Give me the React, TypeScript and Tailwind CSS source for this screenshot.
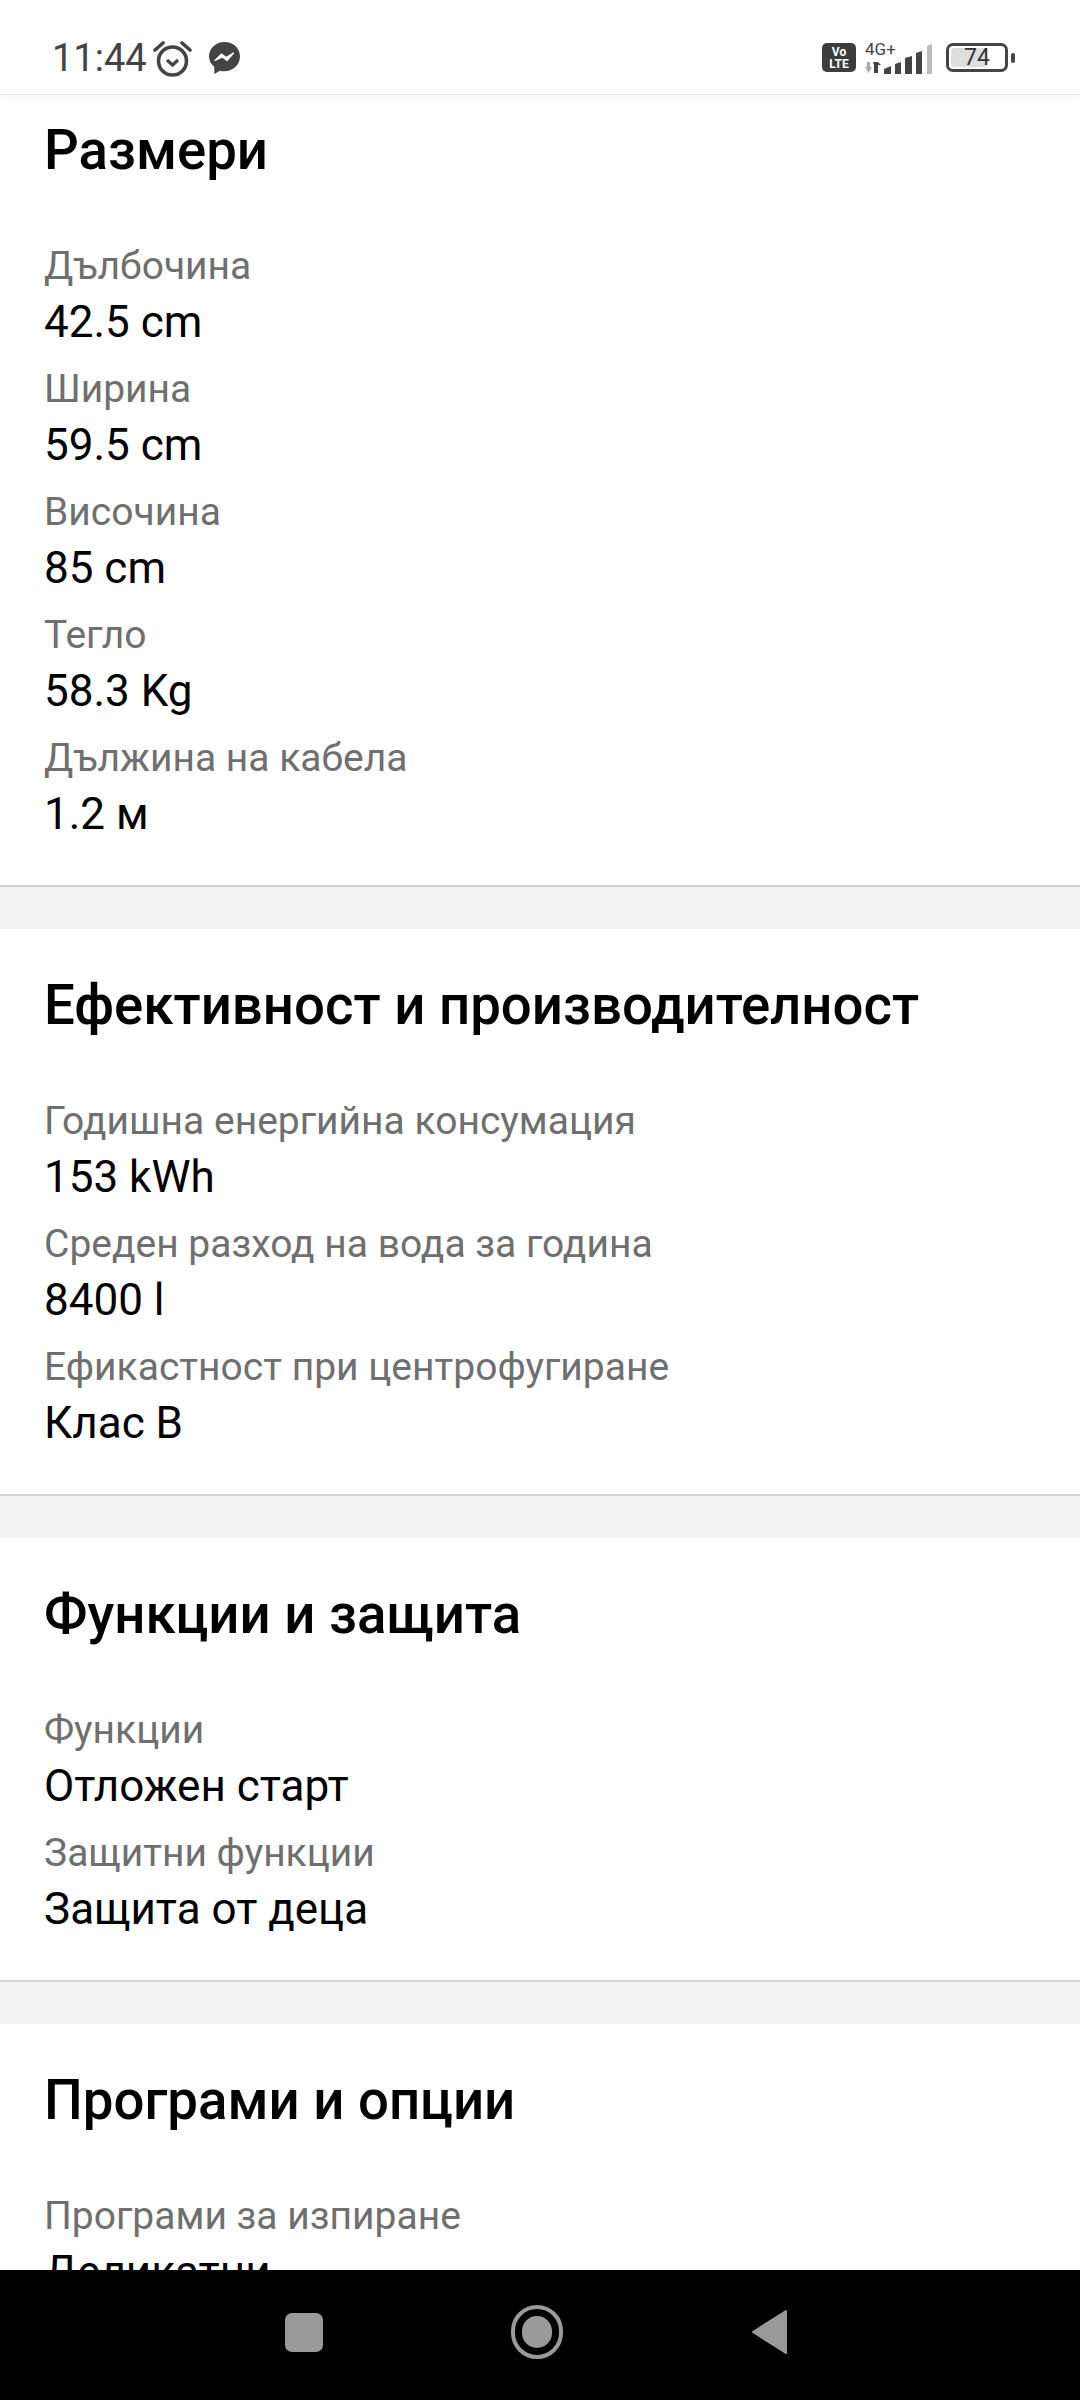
import React from 'react';

type Spec = { label: string; value: string };
type Group = { title: string; specs: Spec[] };

const groups: Group[] = [
  {
    title: 'Размери',
    specs: [
      { label: 'Дълбочина', value: '42.5 cm' },
      { label: 'Ширина', value: '59.5 cm' },
      { label: 'Височина', value: '85 cm' },
      { label: 'Тегло', value: '58.3 Kg' },
      { label: 'Дължина на кабела', value: '1.2 м' },
    ],
  },
  {
    title: 'Ефективност и производителност',
    specs: [
      { label: 'Годишна енергийна консумация', value: '153 kWh' },
      { label: 'Среден разход на вода за година', value: '8400 l' },
      { label: 'Ефикастност при центрофугиране', value: 'Клас B' },
    ],
  },
  {
    title: 'Функции и защита',
    specs: [
      { label: 'Функции', value: 'Отложен старт' },
      { label: 'Защитни функции', value: 'Защита от деца' },
    ],
  },
  {
    title: 'Програми и опции',
    specs: [{ label: 'Програми за изпиране', value: 'Деликатни' }],
  },
];

function AlarmIcon() {
  return (
    <svg width="39" height="37" viewBox="0 0 39 37" fill="none" stroke="#444" strokeWidth="3.6">
      <circle cx="19.500" cy="21" r="14" />
      <path d="M14 20l5.500 5 5.500-5" strokeWidth="3.200" />
      <path d="M2 10l8-7M37 10l-8-7" strokeLinecap="round" />
    </svg>
  );
}

function MessengerIcon() {
  return (
    <svg width="31" height="32" viewBox="0 0 31 32">
      <path d="M15.500 0C7 0 0 6.300 0 14.200c0 4.300 2 8 5.300 10.600V32l5.800-3.300c1.400.4 2.900.6 4.400.6 8.500 0 15.500-6.500 15.500-15S24 0 15.500 0z" fill="#444" />
      <path d="M6 18.500l6.500-6.500 4.500 3.500 7.500-4.500-6.500 7.500-4.500-3.500z" fill="#fff" stroke="#fff" strokeWidth="1.200" strokeLinejoin="round" />
    </svg>
  );
}

function VolteIcon() {
  return (
    <div className="flex h-[29px] w-[34px] flex-col items-center justify-center rounded-[5px] bg-[#3c3c3c] text-[12px] leading-[12px] font-bold text-white">
      <span>Vo</span>
      <span>LTE</span>
    </div>
  );
}

function SignalIcon() {
  return (
    <svg width="68" height="30" viewBox="0 0 68 30">
      {/* data arrows */}
      <path d="M0 23h2v-5h3v5h2l-3.500 6z" fill="#aaa" />
      <path d="M8 18h5l3 3h-3v8H9v-8z" fill="#444" />
      {/* signal bars */}
      <path d="M19 25l7-3v8h-7zM30 20l6-2v12h-6zM40 14l7-2v18h-7zM51 9l6-2v23h-6z" fill="#444" />
      <path d="M62 2l5-2v30h-5z" fill="#bbb" />
    </svg>
  );
}

function BatteryIcon() {
  return (
    <div className="flex items-center gap-[3px]">
      <div className="relative flex h-[29px] w-[62px] items-center justify-center overflow-hidden rounded-[7px] border-[3px] border-[#444]">
        <div className="absolute inset-y-[2px] left-[2px] w-[36px] rounded-[3px] bg-[#dedede]" />
        <span className="relative text-[23px] leading-none text-[#333]">74</span>
      </div>
      <div className="h-[10px] w-[4px] rounded-[2px] bg-[#444]" />
    </div>
  );
}

function StatusBar() {
  return (
    <header className="relative z-10 flex h-[94px] shrink-0 items-start justify-between bg-white pt-[38px] pr-[65px] pl-[52px] shadow-[0_1px_0_#e8e8e8,0_3px_10px_rgba(0,0,0,0.05)]">
      <div className="flex items-center">
        <span className="text-[38px] leading-[40px] text-[#444]">11:44</span>
        <span className="ml-[6px] flex"><AlarmIcon /></span>
        <span className="ml-[17px] flex"><MessengerIcon /></span>
      </div>
      <div className="flex items-start pt-[5px]">
        <VolteIcon />
        <div className="relative ml-[9px] h-[30px] w-[68px]">
          <span className="absolute -top-[3px] left-0 text-[17px] leading-[18px] text-[#444]">4G+</span>
          <div className="absolute -bottom-[1px] left-0 flex"><SignalIcon /></div>
        </div>
        <div className="ml-[13px]"><BatteryIcon /></div>
      </div>
    </header>
  );
}

function SpecRow({ spec }: { spec: Spec }) {
  return (
    <div className="h-[123px]">
      <div className="text-[39px] leading-[56px] text-[#6f6f6f]">{spec.label}</div>
      <div className="text-[44px] leading-[56px] text-black">{spec.value}</div>
    </div>
  );
}

function SpecGroup({ group, first }: { group: Group; first: boolean }) {
  return (
    <section className="border-b-2 border-[#d6d6d6] bg-white px-[44px]">
      <h2 className={`text-[54.600px] leading-[64px] font-medium text-black ${first ? 'pt-[24px]' : 'pt-[44px]'}`}>
        {group.title}
      </h2>
      <div className="pt-[56px] pb-[32px]">
        {group.specs.map((spec) => (
          <SpecRow key={spec.label} spec={spec} />
        ))}
      </div>
    </section>
  );
}

function NavBar() {
  return (
    <nav className="flex h-[130px] shrink-0 items-center justify-center bg-black pr-[9px] pb-[6px]">
      <div className="flex items-center gap-[188px]">
        <div className="h-[39px] w-[38px] rounded-[7px] bg-[#9a9a9a]" />
        <div className="flex h-[54px] w-[52px] items-center justify-center rounded-full border-[4px] border-[#9a9a9a]">
          <div className="h-[32px] w-[30px] rounded-full bg-[#9a9a9a]" />
        </div>
        <svg width="36" height="46" viewBox="0 0 36 46">
          <path d="M35 2v42L2 23z" fill="#9a9a9a" stroke="#9a9a9a" strokeWidth="2" strokeLinejoin="round" />
        </svg>
      </div>
    </nav>
  );
}

export default function App() {
  return (
    <div className="flex h-[2400px] w-[1080px] flex-col overflow-hidden bg-white font-['Roboto',sans-serif]">
      <StatusBar />
      <main className="min-h-0 flex-1 overflow-hidden bg-[#f2f2f2]">
        <div className="flex flex-col gap-[42px]">
          {groups.map((group, i) => (
            <SpecGroup key={group.title} group={group} first={i === 0} />
          ))}
        </div>
      </main>
      <NavBar />
    </div>
  );
}
